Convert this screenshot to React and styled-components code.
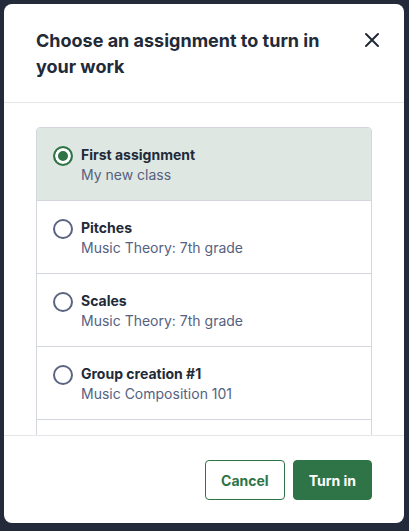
import React, { useState } from 'react'
import styled, { createGlobalStyle } from 'styled-components'

const assignments = [
  { id: 1, title: 'First assignment', course: 'My new class' },
  { id: 2, title: 'Pitches', course: 'Music Theory: 7th grade' },
  { id: 3, title: 'Scales', course: 'Music Theory: 7th grade' },
  { id: 4, title: 'Group creation #1', course: 'Music Composition 101' },
  { id: 5, title: 'Rhythm practice', course: 'Music Theory: 7th grade' },
]

function App() {
  const [selected, setSelected] = useState(1)

  return (
    <>
      <GlobalStyle />
      <Modal>
        <Header>
          <Title>Choose an assignment to turn in your work</Title>
          <CloseButton aria-label="Close">
            <svg width="16" height="16" viewBox="0 0 16 16" fill="none">
              <path d="M2 2L14 14M14 2L2 14" stroke="#222a38" strokeWidth="2" strokeLinecap="round" />
            </svg>
          </CloseButton>
        </Header>
        <Body>
          <List>
            {assignments.map((a) => (
              <Row key={a.id} $active={selected === a.id} onClick={() => setSelected(a.id)}>
                <Radio $checked={selected === a.id} />
                <RowText>
                  <RowTitle>{a.title}</RowTitle>
                  <RowSub>{a.course}</RowSub>
                </RowText>
              </Row>
            ))}
          </List>
        </Body>
        <Footer>
          <Button>Cancel</Button>
          <Button $primary>Turn in</Button>
        </Footer>
      </Modal>
    </>
  )
}

export default App

const GlobalStyle = createGlobalStyle`
body {
  margin: 0;
  background: #232b3a;
  font-family: Inter, "Noto Sans", sans-serif;
}
`

const Modal = styled.div`
margin: 4px;
width: 400px;
height: 519px;
background: #fff;
border-radius: 8px;
display: flex;
flex-direction: column;
overflow: hidden;
`

const Header = styled.div`
display: flex;
justify-content: space-between;
align-items: flex-start;
padding: 24px 20px 22px 32px;
border-bottom: 1px solid #e4e6ea;
`

const Title = styled.h2`
margin: 0;
max-width: 300px;
font-size: 18px;
line-height: 26px;
font-weight: 700;
color: #222a38;
`

const CloseButton = styled.button`
border: none;
background: none;
padding: 0;
width: 24px;
height: 24px;
display: flex;
align-items: center;
justify-content: center;
cursor: pointer;
`

const Body = styled.div`
flex: 1;
min-height: 0;
overflow-y: auto;
scrollbar-width: none;
padding: 24px 32px 0;
`

const List = styled.div`
border: 1px solid #d3d6dc;
border-radius: 4px;
overflow: hidden;
`

const Row = styled.div`
display: flex;
align-items: flex-start;
gap: 8px;
padding: 17px 16px 15px;
background: ${(p) => (p.$active ? '#dfe7e3' : '#fff')};
border-bottom: 1px solid #d3d6dc;
cursor: pointer;
&:last-child {
  border-bottom: none;
}
`

const Radio = styled.span`
box-sizing: border-box;
flex: none;
width: 20px;
height: 20px;
margin-top: 1px;
border-radius: 50%;
border: 2px solid ${(p) => (p.$checked ? '#2f7447' : '#5b6480')};
background: ${(p) => (p.$checked ? '#2f7447' : '#fff')};
box-shadow: ${(p) => (p.$checked ? 'inset 0 0 0 3px #fff' : 'none')};
`

const RowText = styled.div`
display: flex;
flex-direction: column;
`

const RowTitle = styled.p`
margin: 0;
font-size: 14px;
line-height: 20px;
font-weight: 700;
color: #222a38;
`

const RowSub = styled.p`
margin: 0;
font-size: 14px;
line-height: 20px;
color: #56617f;
`

const Footer = styled.div`
display: flex;
justify-content: flex-end;
gap: 8px;
padding: 24px 32px 23px;
border-top: 1px solid #e4e6ea;
`

const Button = styled.button`
height: 40px;
padding: 0 15px;
border-radius: 4px;
font-family: Inter, "Noto Sans", sans-serif;
font-size: 14px;
font-weight: 700;
cursor: pointer;
border: 1px solid #2f7447;
background: ${(p) => (p.$primary ? '#2f7447' : '#fff')};
color: ${(p) => (p.$primary ? '#fff' : '#2f7447')};
`
